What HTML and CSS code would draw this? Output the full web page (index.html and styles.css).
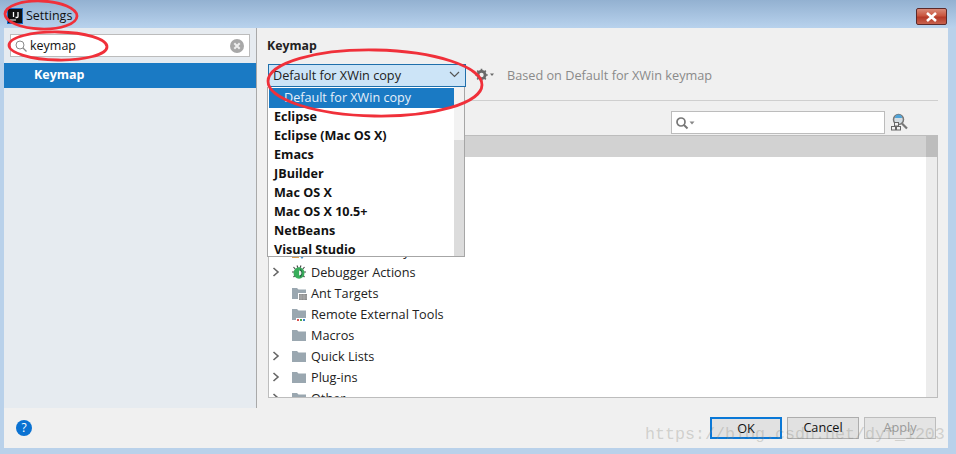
FILE: index.html
```html
<!DOCTYPE html>
<html lang="en">
<head>
<meta charset="utf-8">
<title>Settings</title>
<link rel="stylesheet" href="styles.css">
</head>
<body>
<div class="window">
  <header class="titlebar">
    <svg class="app-icon" width="16" height="16" viewBox="0 0 16 16"><rect width="16" height="16" fill="#1668c4"/><rect x="1" y="1" width="14" height="14" fill="#111"/><path d="M6.500 4v5M11 4v4.500a1 1 0 0 1-1 1H8.500" fill="none" stroke="#fff" stroke-width="1.300"/><rect x="3" y="11.500" width="6" height="1" fill="#fff"/></svg>
    <span class="title-text">Settings</span>
    <button class="close" aria-label="Close"><svg width="15" height="10" viewBox="0 0 15 10"><path d="M3 1l9 8M12 1l-9 8" stroke="#fff" stroke-width="2.600" fill="none"/></svg></button>
  </header>
  <div class="client">
    <div class="main">
      <aside class="sidebar">
        <div class="side-search">
          <svg width="12" height="12" viewBox="0 0 12 12"><circle cx="5" cy="5" r="4" fill="none" stroke="#8a8a8a" stroke-width="1"/><path d="M8 8l3.500 3.500" stroke="#8a8a8a" stroke-width="1.300"/></svg>
          <span class="side-query">keymap</span>
          <svg class="clear" width="14" height="14" viewBox="0 0 14 14"><circle cx="7" cy="7" r="7" fill="#a8a8a8"/><path d="M4.300 4.300l5.400 5.400M9.700 4.300l-5.400 5.400" stroke="#eee" stroke-width="2"/></svg>
        </div>
        <div class="side-row">Keymap</div>
      </aside>
      <section class="pane">
        <h1 class="pane-title">Keymap</h1>
        <div class="combo-row">
          <div class="combo">
            <span>Default for XWin copy</span>
            <svg width="11" height="7" viewBox="0 0 11 7"><path d="M1 1l4.500 4.500L10 1" fill="none" stroke="#555" stroke-width="1.200"/></svg>
          </div>
          <svg class="gear" width="20" height="14" viewBox="0 0 20 14"><circle cx="6.500" cy="7" r="3.600" fill="none" stroke="#6a6a6a" stroke-width="2.800"/><path d="M6.500 0.800v2.200M6.500 11v2.200M0.300 7h2.200M10.500 7h2.200M2.200 2.700l1.500 1.500M9.300 9.800l1.500 1.500M10.800 2.700l-1.500 1.500M3.700 9.800l-1.500 1.500" stroke="#6a6a6a" stroke-width="1.700"/><path d="M15 5.500h4l-2 2.500z" fill="#6a6a6a"/></svg>
          <span class="based">Based on Default for XWin keymap</span>
        </div>
        <div class="rule"></div>
        <div class="filter-row">
          <div class="filter">
            <svg width="22" height="14" viewBox="0 0 22 14"><circle cx="6" cy="6" r="4" fill="none" stroke="#777" stroke-width="1.700"/><path d="M9 9l3.500 3.500" stroke="#777" stroke-width="2"/><path d="M14.500 5.500h5l-2.500 3z" fill="#888"/></svg>
          </div>
          <svg class="find" width="18" height="18" viewBox="0 0 18 18"><circle cx="8.500" cy="6.500" r="5" fill="#d5dde2" stroke="#777" stroke-width="1.500"/><path d="M5 5a3.500 3.500 0 0 1 7 0z" fill="#4fa3d8"/><path d="M12 10.500l5 5" stroke="#777" stroke-width="2.200"/><rect x="4.500" y="9.500" width="4" height="3.500" fill="#f0f0f0" stroke="#666"/><rect x="1.500" y="13.500" width="4" height="3.500" fill="#f0f0f0" stroke="#666"/><rect x="6.500" y="13.500" width="4" height="3.500" fill="#f0f0f0" stroke="#666"/></svg>
        </div>
        <div class="table">
          <div class="table-body">
            <div class="table-head"></div>
            <ul class="tree">
              <li class="tree-row"><span class="chev-gap"></span><svg class="node" width="16" height="16" viewBox="0 0 16 16"><path d="M1 13h7v2H1z" fill="#e0a050"/><path d="M8 12h6l-3 4z" fill="#3b8fd0"/></svg><span>External Build Systems</span></li>
              <li class="tree-row"><svg class="chev" width="8" height="10" viewBox="0 0 8 10"><path d="M1.500 1l4.500 4-4.500 4" fill="none" stroke="#666" stroke-width="1.600"/></svg><svg class="node" width="16" height="16" viewBox="0 0 16 16"><path d="M2.500 3l2.500 3M13.500 3L11 6M1 8h3M15 8h-3M2.500 13l2.500-2.500M13.500 13L11 10.500M6 1.500l1 2.500M10 1.500L9 4" stroke="#444" stroke-width="1.100"/><ellipse cx="8" cy="9" rx="5.500" ry="5.800" fill="#38ad5a"/><path d="M9 4.500a5.500 5.500 0 0 1 0 9z" fill="#2c6b48"/><path d="M8 6.500a2.500 2.500 0 0 1 0 5z" fill="#e9f3ec"/></svg><span>Debugger Actions</span></li>
              <li class="tree-row"><span class="chev-gap"></span><svg class="node" width="16" height="16" viewBox="0 0 16 16"><use href="#folder"/><rect x="7" y="8" width="9" height="7" fill="#fff"/><rect x="8" y="9" width="8" height="6" fill="#8d8d8d"/><path d="M8 11h8M8 13h8M10 9v6M13 9v6" stroke="#b5b5b5" stroke-width=".7"/></svg><span>Ant Targets</span></li>
              <li class="tree-row"><span class="chev-gap"></span><svg class="node" width="16" height="16" viewBox="0 0 16 16"><use href="#folder"/><rect x="5" y="12" width="11" height="3" fill="#fff"/><rect x="6" y="13" width="2" height="2" fill="#d9534f"/><rect x="9" y="13" width="2" height="2" fill="#4aa84a"/><rect x="12" y="13" width="2" height="2" fill="#3b82c4"/></svg><span>Remote External Tools</span></li>
              <li class="tree-row"><span class="chev-gap"></span><svg class="node" width="16" height="16" viewBox="0 0 16 16"><use href="#folder"/></svg><span>Macros</span></li>
              <li class="tree-row"><svg class="chev" width="8" height="10" viewBox="0 0 8 10"><path d="M1.500 1l4.500 4-4.500 4" fill="none" stroke="#666" stroke-width="1.600"/></svg><svg class="node" width="16" height="16" viewBox="0 0 16 16"><use href="#folder"/></svg><span>Quick Lists</span></li>
              <li class="tree-row"><svg class="chev" width="8" height="10" viewBox="0 0 8 10"><path d="M1.500 1l4.500 4-4.500 4" fill="none" stroke="#666" stroke-width="1.600"/></svg><svg class="node" width="16" height="16" viewBox="0 0 16 16"><use href="#folder"/></svg><span>Plug-ins</span></li>
              <li class="tree-row"><svg class="chev" width="8" height="10" viewBox="0 0 8 10"><path d="M1.500 1l4.500 4-4.500 4" fill="none" stroke="#666" stroke-width="1.600"/></svg><svg class="node" width="16" height="16" viewBox="0 0 16 16"><use href="#folder"/></svg><span>Other</span></li>
            </ul>
          </div>
          <div class="table-scroll"><div class="table-thumb"></div></div>
        </div>
        <ul class="dropdown">
          <li class="opt opt-current">Default for XWin copy</li>
          <li class="opt">Eclipse</li>
          <li class="opt">Eclipse (Mac OS X)</li>
          <li class="opt">Emacs</li>
          <li class="opt">JBuilder</li>
          <li class="opt">Mac OS X</li>
          <li class="opt">Mac OS X 10.5+</li>
          <li class="opt">NetBeans</li>
          <li class="opt">Visual Studio</li>
          <li class="drop-scroll"><div class="drop-thumb"></div></li>
        </ul>
      </section>
    </div>
    <footer class="footer">
      <span class="help">?</span>
      <div class="buttons">
        <button class="btn btn-default">OK</button>
        <button class="btn">Cancel</button>
        <button class="btn btn-disabled">Apply</button>
      </div>
    </footer>
  </div>
  <svg class="defs" width="0" height="0"><defs><path id="folder" d="M1 3h5l1.500 1.500H15V14H1z" fill="#9aa7b0"/></defs></svg>
  <svg class="marks" width="956" height="454" viewBox="0 0 956 454">
    <ellipse cx="41" cy="15" rx="36" ry="14" transform="rotate(2 41 15)"/>
    <ellipse cx="58" cy="46" rx="49" ry="14" transform="rotate(1 58 46)"/>
    <ellipse cx="375" cy="83" rx="107" ry="33" transform="rotate(1 375 83)"/>
  </svg>
  <div class="watermark">https://blog.csdn.net/dyf_1203</div>
</div>
</body>
</html>
```
FILE: styles.css
```css
* { box-sizing: border-box; }
html, body { margin: 0; padding: 0; }
body { width: 956px; height: 454px; overflow: hidden; background: #b9d1ea; font-family: "Open Sans", "Noto Sans", sans-serif; font-size: 12.700px; color: #1c1c1c; }
ul { list-style: none; margin: 0; padding: 0; }
.window { position: relative; width: 956px; height: 454px; display: flex; flex-direction: column; padding: 0 8px 6px 4px; background: #b9d1ea; }
.titlebar { height: 28px; margin: 0 -8px 0 -4px; padding: 0 9px 0 8px; display: flex; align-items: flex-start; gap: 3px; background: linear-gradient(#93b1d1, #b8d2ed); flex: none; }
.app-icon { margin-top: 8px; margin-left: -1px; }
.title-text { margin-top: 7px; font-size: 12.500px; line-height: 17px; color: #111; }
.close { margin: 8px 0 0 auto; width: 31px; height: 17px; padding: 0; border: 1px solid #5c2a2a; border-radius: 2px; display: flex; align-items: center; justify-content: center; background: linear-gradient(#d98a78 0, #c9563f 45%, #b53a28 55%, #c8624e 100%); }
.client { flex: 1; min-height: 0; display: flex; flex-direction: column; background: #f0f0f0; }
.main { flex: 1; min-height: 0; display: flex; }
.sidebar { width: 253px; flex: none; padding-top: 6px; background: #e6ebf0; border-right: 1px solid #a9a9a9; }
.side-search { height: 23px; margin: 0 6px; padding: 0 5px 0 4px; display: flex; align-items: center; gap: 3px; background: #fff; border: 1px solid #bcbcbc; }
.side-query { font-size: 12.500px; color: #111; }
.clear { margin-left: auto; }
.side-row { height: 25px; margin-top: 6px; padding-left: 30px; background: #1a7ac4; color: #fff; font-weight: 700; font-size: 12.500px; line-height: 24px; }
.pane { position: relative; flex: 1; min-width: 0; padding: 9px 10px 10px 10px; display: flex; flex-direction: column; }
.pane-title { margin: 0; font-size: 12.300px; font-weight: 700; line-height: 17px; color: #222; }
.combo-row { height: 23px; margin: 10px 0 0 1px; display: flex; align-items: center; }
.combo { width: 198px; height: 23px; padding: 0 5px 2px 4px; display: flex; align-items: center; justify-content: space-between; background: #cce4f7; border: 1px solid #1f6fab; font-size: 12.700px; color: #222; }
.gear { margin-left: 9px; margin-bottom: 1px; }
.based { margin: 0 0 2px 12px; color: #8a8a8a; font-size: 12.700px; }
.rule { height: 1px; margin-top: 13px; background: #cfcfcf; margin-left: 1px; }
.filter-row { height: 24px; margin-top: 9px; display: flex; align-items: center; justify-content: flex-end; padding-right: 30px; gap: 5px; }
.filter { width: 214px; height: 23px; padding: 3px 3px; background: #fff; border: 1px solid #bcbcbc; display: flex; }
.filter svg { margin-top: 1px; }
.table { flex: 1; min-height: 0; margin: 1px 0 0 1px; display: flex; border: 1px solid #bdbdbd; background: #fff; overflow: hidden; }
.table-body { flex: 1; min-width: 0; display: flex; flex-direction: column; overflow: hidden; }
.table-head { height: 21px; flex: none; background: #d2d2d2; }
.tree { padding-top: 83px; }
.tree-row { height: 21px; padding-left: 3px; display: flex; align-items: center; font-size: 12.700px; color: #222; white-space: nowrap; }
.chev, .chev-gap { width: 8px; flex: none; margin-right: 11px; }
.node { flex: none; margin-right: 4px; }
.table-scroll { width: 11px; flex: none; background: #ececec; }
.table-thumb { height: 21px; background: #bdbdbd; }
.dropdown { position: absolute; left: 10px; top: 59px; width: 198px; height: 170px; padding: 0 0 0 1px; background: #fff; border: 1px solid #a6a6a6; border-top: 0; overflow: hidden; font-weight: 700; font-size: 12.600px; color: #111; }
.opt { height: 19px; line-height: 19px; padding-left: 5px; margin-right: 10px; white-space: nowrap; }
.opt-current { height: 20px; margin: 1px 10px -1px 0; padding-left: 15px; background: #1a7ac4; color: #e6f0fa; font-weight: 400; }
.drop-scroll { position: absolute; right: 0; top: 0; bottom: 0; width: 10px; background: #f2f2f2; }
.drop-thumb { height: 117px; margin-top: 53px; background: #dcdcdc; }
.footer { height: 40px; flex: none; padding: 0 12px 0 12px; display: flex; align-items: center; justify-content: space-between; }
.help { width: 16px; height: 16px; border-radius: 50%; background: #0a72d2; color: #fff; font-size: 12px; font-weight: 400; line-height: 16px; text-align: center; }
.buttons { display: flex; gap: 5px; }
.btn { width: 72px; height: 22px; padding: 0 0 2px; background: #e1e1e1; border: 1px solid #adadad; font: inherit; font-size: 12.700px; color: #111; }
.btn-default { border: 2px solid #0a78d7; }
.btn-disabled { background: #e4e4e4; border-color: #bdbdbd; color: #9a9a9a; }
.defs { position: absolute; }
.marks { position: absolute; left: 0; top: 0; pointer-events: none; }
.marks ellipse { fill: none; stroke: #f0303a; stroke-width: 2.800; }
.watermark { position: absolute; left: 645px; top: 424px; font-family: "Liberation Mono", monospace; font-size: 16.670px; line-height: 22px; color: rgba(130,130,120,.3); white-space: nowrap; pointer-events: none; }
```
